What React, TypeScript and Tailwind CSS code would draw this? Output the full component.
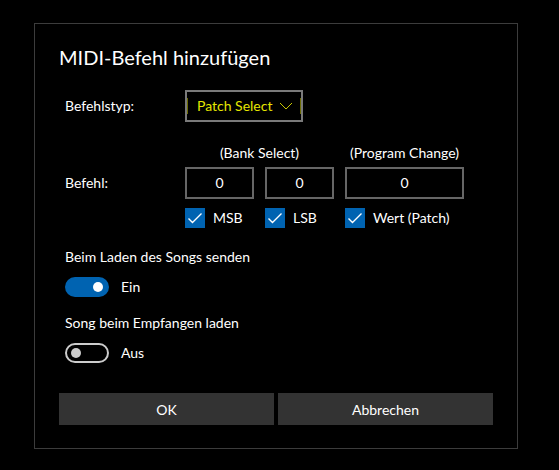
import React from "react";

const font = { fontFamily: 'Lato, "Noto Sans", sans-serif' };

function Check({ label }: { label: string }) {
  return (
    <div className="flex items-center gap-2">
      <div className="w-5 h-5 bg-[#0063b1] flex items-center justify-center">
        <svg width="20" height="20" viewBox="0 0 20 20" fill="none">
          <path d="M3.5 10.5 L7.5 14.5 L16.5 5.5" stroke="#fff" strokeWidth="1.4" />
        </svg>
      </div>
      <span className="text-[14px] leading-5 text-white">{label}</span>
    </div>
  );
}

function NumBox({ w }: { w: string }) {
  return (
    <div className={`${w} h-8 border-2 border-[#666666] flex items-center justify-center text-[14px] leading-5 text-white`}>
      0
    </div>
  );
}

function Toggle({ on, label }: { on: boolean; label: string }) {
  return (
    <div className="flex items-center gap-3 h-5">
      {on ? (
        <div className="w-11 h-5 rounded-full bg-[#0063b1] flex items-center justify-end pr-[6px]">
          <div className="w-[10px] h-[10px] rounded-full bg-white" />
        </div>
      ) : (
        <div className="w-11 h-5 rounded-full border-2 border-[#cccccc] flex items-center pl-[4px]">
          <div className="w-[10px] h-[10px] rounded-full bg-[#cccccc]" />
        </div>
      )}
      <span className="text-[14px] leading-5 text-white">{label}</span>
    </div>
  );
}

export default function App() {
  return (
    <div className="w-[559px] h-[470px] bg-black pt-[23px] pl-[34px]" style={font}>
      <div className="w-[484px] h-[426px] border border-[#3c3c3c] px-6 flex flex-col">
        <h1 className="text-[20px] leading-7 text-white mt-[19px]">MIDI-Befehl hinzufügen</h1>

        <div className="flex items-center mt-[19px] ml-[6px]">
          <div className="w-[120px] text-[14px] leading-5 text-white">Befehlstyp:</div>
          <div className="relative w-[118px] h-8 border-2 border-[#7a7a7a] flex items-center justify-between pl-[10px] pr-[8px]">
            <span className="text-[14px] leading-5 text-[#e6e600]">Patch Select</span>
            <svg width="14" height="8" viewBox="0 0 14 8" fill="none">
              <path d="M1 1 L7 7 L13 1" stroke="#c8c800" strokeWidth="1" />
            </svg>
            <span className="absolute left-0 top-[6px] w-px h-4 bg-[#6b6b00]" />
            <span className="absolute right-0 top-[6px] w-px h-4 bg-[#6b6b00]" />
          </div>
        </div>

        <div className="flex ml-[6px] mt-[21px]">
          <div className="w-[120px] flex flex-col">
            <div className="h-5" />
            <div className="h-8 mt-1 flex items-center text-[14px] leading-5 text-white">Befehl:</div>
          </div>
          <div className="flex gap-[11px]">
            <div className="flex flex-col">
              <div className="h-5 text-[14px] leading-5 text-white text-center">(Bank Select)</div>
              <div className="flex gap-[11px] mt-1">
                <NumBox w="w-[69px]" />
                <NumBox w="w-[69px]" />
              </div>
              <div className="flex gap-[11px] mt-[9px]">
                <div className="w-[69px]"><Check label="MSB" /></div>
                <div className="w-[69px]"><Check label="LSB" /></div>
              </div>
            </div>
            <div className="flex flex-col">
              <div className="h-5 text-[14px] leading-5 text-white text-center">(Program Change)</div>
              <div className="mt-1">
                <NumBox w="w-[119px]" />
              </div>
              <div className="mt-[9px]"><Check label="Wert (Patch)" /></div>
            </div>
          </div>
        </div>

        <div className="ml-[6px] mt-[19px] text-[14px] leading-5 text-white">Beim Laden des Songs senden</div>
        <div className="ml-[6px] mt-[10px]">
          <Toggle on label="Ein" />
        </div>
        <div className="ml-[6px] mt-[16px] text-[14px] leading-5 text-white">Song beim Empfangen laden</div>
        <div className="ml-[6px] mt-[10px]">
          <Toggle on={false} label="Aus" />
        </div>

        <div className="flex gap-1 mt-[30px]">
          <button className="flex-1 h-8 bg-[#333333] text-[14px] text-white">OK</button>
          <button className="flex-1 h-8 bg-[#333333] text-[14px] text-white">Abbrechen</button>
        </div>
      </div>
    </div>
  );
}
